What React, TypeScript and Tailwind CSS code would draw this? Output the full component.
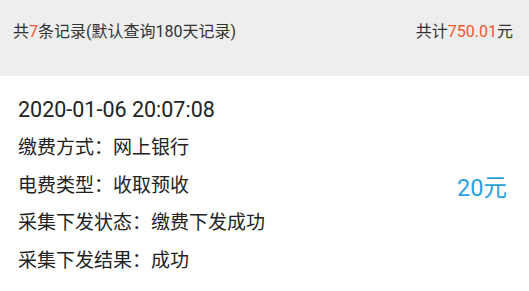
const font = "font-['Roboto','Noto_Sans_CJK_SC',sans-serif]";

const rows = [
  { label: '缴费方式', value: '网上银行' },
  { label: '电费类型', value: '收取预收' },
  { label: '采集下发状态', value: '缴费下发成功' },
  { label: '采集下发结果', value: '成功' },
];

export default function App() {
  return (
    <div className={`w-[529px] h-[291px] overflow-hidden bg-white ${font}`}>
      {/* summary bar */}
      <div className="h-[76px] bg-[#eeeeee] flex justify-between items-start pt-[21px] pl-[13px] pr-[16px] text-[16px] leading-[22px] text-[#333333]">
        <div>
          共<span className="text-[#f2552c]">7</span>条记录(默认查询180天记录)
        </div>
        <div>
          共计<span className="text-[#f2552c]">750.01</span>元
        </div>
      </div>

      {/* record card */}
      <div className="flex items-center pl-[18px] pr-[22px] pt-[14px]">
        <div className="flex-1 text-[#222222]">
          <div className="text-[21.5px] leading-[39px]">2020-01-06 20:07:08</div>
          {rows.map((r) => (
            <div key={r.label} className="text-[19px] leading-[37.5px]">
              {r.label}：{r.value}
            </div>
          ))}
        </div>
        <div className="mt-[8px] text-[23.5px] text-[#29a1e0]">20元</div>
      </div>
    </div>
  );
}
